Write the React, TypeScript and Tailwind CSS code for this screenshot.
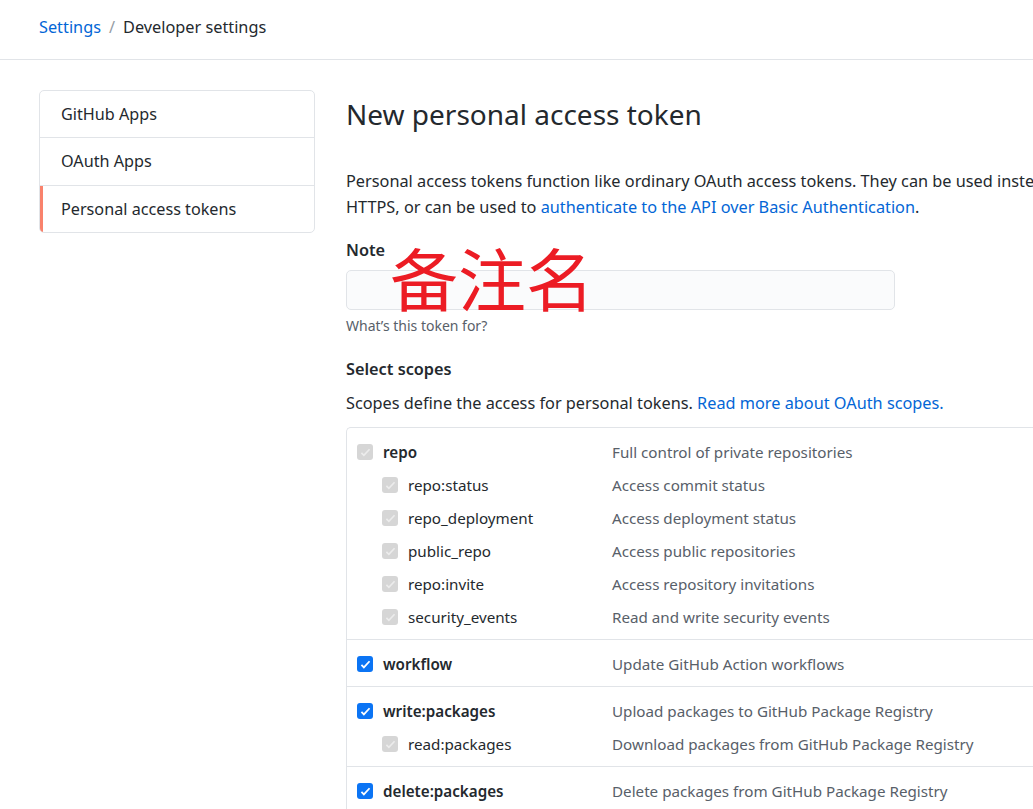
import React from 'react';

type Scope = {
  name: string;
  desc: string;
  checked: boolean;
  children?: { name: string; desc: string }[];
};

const scopes: Scope[] = [
  {
    name: 'repo',
    desc: 'Full control of private repositories',
    checked: false,
    children: [
      { name: 'repo:status', desc: 'Access commit status' },
      { name: 'repo_deployment', desc: 'Access deployment status' },
      { name: 'public_repo', desc: 'Access public repositories' },
      { name: 'repo:invite', desc: 'Access repository invitations' },
      { name: 'security_events', desc: 'Read and write security events' },
    ],
  },
  { name: 'workflow', desc: 'Update GitHub Action workflows', checked: true },
  {
    name: 'write:packages',
    desc: 'Upload packages to GitHub Package Registry',
    checked: true,
    children: [{ name: 'read:packages', desc: 'Download packages from GitHub Package Registry' }],
  },
  { name: 'delete:packages', desc: 'Delete packages from GitHub Package Registry', checked: true },
];

function Box({ on }: { on: boolean }) {
  if (on) {
    return (
      <span className="flex h-[16px] w-[16px] shrink-0 items-center justify-center rounded-[3px] bg-[#0b74f4]">
        <svg viewBox="0 0 16 16" className="h-[13px] w-[13px]">
          <path d="M3 8.5l3 3 7-7.5" fill="none" stroke="#fff" strokeWidth="2.2" />
        </svg>
      </span>
    );
  }
  return (
    <span className="flex h-[16px] w-[16px] shrink-0 items-center justify-center rounded-[3px] bg-[#d6d6d6]">
      <svg viewBox="0 0 16 16" className="h-[13px] w-[13px]">
        <path d="M3 8.5l3 3 7-7.5" fill="none" stroke="#ececec" strokeWidth="2" />
      </svg>
    </span>
  );
}

export default function App() {
  return (
    <div
      className="h-[809px] w-[1033px] overflow-hidden bg-white text-[#24292e]"
      style={{ fontFamily: '"Noto Sans", "Open Sans", sans-serif' }}
    >
      {/* breadcrumb */}
      <div className="flex h-[60px] items-center border-b border-[#e1e4e8] pl-[39px] pb-[5px] text-[16.3px]">
        <a className="text-[#0366d6]">Settings</a>
        <span className="mx-[8px] text-[#959da5]">/</span>
        <span>Developer settings</span>
      </div>

      <div className="flex w-[1200px] pt-[30px] pl-[39px]">
        {/* sidebar */}
        <nav className="w-[276px] shrink-0 self-start overflow-hidden rounded-[5px] border border-[#e1e4e8] text-[16.2px]">
          <div className="flex h-[47px] items-center border-b border-[#e1e4e8] pl-[21px]">GitHub Apps</div>
          <div className="flex h-[48px] items-center border-b border-[#e1e4e8] pl-[21px]">OAuth Apps</div>
          <div className="flex h-[46px] items-center border-l-[3px] border-[#f9826c] pl-[18px]">Personal access tokens</div>
        </nav>

        {/* main */}
        <main className="ml-[31px] flex-1">
          <h1 className="mt-[4px] text-[28px] font-normal leading-[40px]">New personal access token</h1>

          <p className="mt-[34px] text-[16.3px] leading-[26px] whitespace-nowrap">
            Personal access tokens function like ordinary OAuth access tokens. They can be used instead of a password for Git over
            <br />
            HTTPS, or can be used to <a className="text-[#0366d6]">authenticate to the API over Basic Authentication</a>.
          </p>

          <div className="relative mt-[19px]">
            <label className="block text-[16.3px] font-semibold leading-[22px]">Note</label>
            <div className="mt-[9px] h-[40px] w-[549px] rounded-[5px] border border-[#e1e4e8] bg-[#fafbfc]" />
            <div className="mt-[6px] text-[14px] leading-[20px] text-[#586069]">What’s this token for?</div>
            <span
              className="absolute left-[44px] top-[4px] text-[68px] leading-[68px] text-[#ec1c24]"
              style={{ fontFamily: '"Noto Sans CJK SC", sans-serif' }}
            >
              备注名
            </span>
          </div>

          <div className="mt-[21px] text-[16.3px] font-semibold leading-[24px]">Select scopes</div>
          <p className="mt-[10px] text-[16.3px] leading-[24px]">
            Scopes define the access for personal tokens.{' '}
            <a className="text-[#0366d6]">Read more about OAuth scopes.</a>
          </p>

          <div className="mt-[12px] rounded-tl-[5px] border-t border-l border-[#e1e4e8] text-[15.2px]">
            {scopes.map((s, i) => (
              <div
                key={s.name}
                className={`${i < scopes.length - 1 ? 'border-b border-[#e1e4e8]' : ''} pt-[8px] pb-[5px]`}
              >
                <div className="flex h-[33px] items-center">
                  <div className="flex w-[265px] items-center gap-[10px] pl-[10px]">
                    <Box on={s.checked} />
                    <span className="font-semibold">{s.name}</span>
                  </div>
                  <span className="text-[#586069]">{s.desc}</span>
                </div>
                {s.children?.map((c) => (
                  <div key={c.name} className="flex h-[33px] items-center">
                    <div className="flex w-[265px] items-center gap-[10px] pl-[35px]">
                      <Box on={false} />
                      <span>{c.name}</span>
                    </div>
                    <span className="text-[#586069]">{c.desc}</span>
                  </div>
                ))}
              </div>
            ))}
          </div>
        </main>
      </div>
    </div>
  );
}
